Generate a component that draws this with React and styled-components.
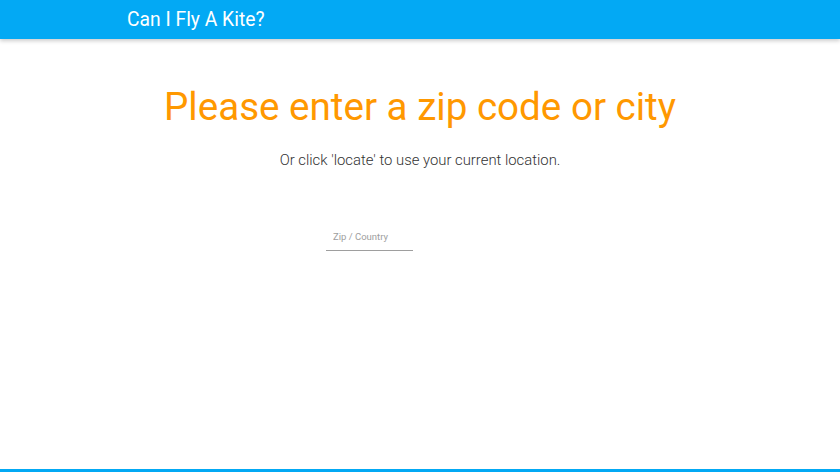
import React from "react";
import styled, { createGlobalStyle } from "styled-components";

const GlobalStyle = createGlobalStyle`
  html, body {
    margin: 0;
    padding: 0;
    background: #fff;
    font-family: Roboto, "Noto Sans", sans-serif;
  }
`;

const Page = styled.div`
  display: flex;
  flex-direction: column;
  height: 472px;
  overflow: hidden;
`;

const Header = styled.header`
  height: 39px;
  background: #03a9f4;
  box-shadow: 0 2px 4px rgba(0, 0, 0, 0.2);
  display: flex;
  align-items: center;
  padding-left: 127px;
  flex-shrink: 0;
  position: relative;
  z-index: 1;
`;

const Brand = styled.div`
  color: #fff;
  font-size: 19.3px;
  font-weight: 400;
`;

const Main = styled.main`
  flex: 1;
  display: flex;
  flex-direction: column;
  align-items: center;
`;

const Title = styled.h1`
  margin: 44px 0 0;
  font-size: 38.6px;
  font-weight: 400;
  line-height: 48px;
  color: #ff9800;
`;

const Subtitle = styled.p`
  margin: 19px 0 0;
  font-size: 14.85px;
  font-weight: 300;
  color: #333;
  line-height: 20px;
`;

const SearchRow = styled.div`
  margin-top: 55px;
  display: flex;
  gap: 13px;
`;

const Field = styled.div`
  width: 87px;
  border-bottom: 1px solid #9e9e9e;
  padding: 0 0 6px 7px;
  box-sizing: border-box;
`;

const Input = styled.input`
  border: none;
  outline: none;
  width: 100%;
  padding: 0;
  font-family: Roboto, sans-serif;
  font-size: 9.5px;
  color: #333;
  background: transparent;
  &::placeholder {
    color: #9e9e9e;
  }
`;

/* locate button slot: present in layout but not shown yet */
const LocateSlot = styled.div`
  width: 88px;
  visibility: hidden;
`;

const Footer = styled.footer`
  height: 3px;
  background: #03a9f4;
  flex-shrink: 0;
`;

export default function App() {
  return (
    <>
      <GlobalStyle />
      <Page>
        <Header>
          <Brand>Can I Fly A Kite?</Brand>
        </Header>
        <Main>
          <Title>Please enter a zip code or city</Title>
          <Subtitle>Or click 'locate' to use your current location.</Subtitle>
          <SearchRow>
            <Field>
              <Input placeholder="Zip / Country" />
            </Field>
            <LocateSlot />
          </SearchRow>
        </Main>
        <Footer />
      </Page>
    </>
  );
}
